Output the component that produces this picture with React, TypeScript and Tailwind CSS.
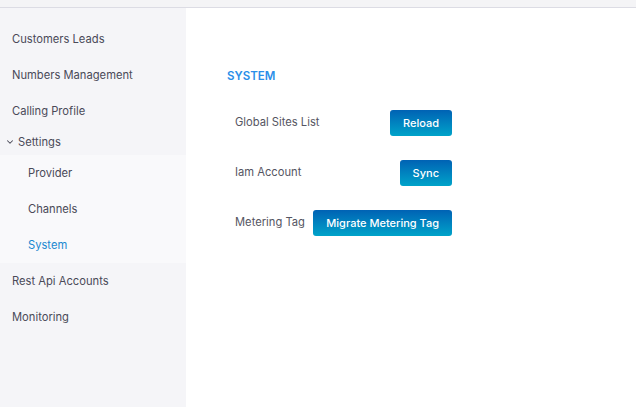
import { ChevronDown } from "lucide-react"

const topItems = ["Customers Leads", "Numbers Management", "Calling Profile"]
const subItems = ["Provider", "Channels", "System"]
const bottomItems = ["Rest Api Accounts", "Monitoring"]

function ActionButton({ label }: { label: string }) {
  return (
    <button className="h-[26px] px-[13px] shrink-0 whitespace-nowrap rounded-[3px] bg-gradient-to-b from-[#0062b4] to-[#00a3c9] text-white text-[11px] font-medium">
      {label}
    </button>
  )
}

export default function App() {
  const rows = [
    { label: "Global Sites List", action: "Reload" },
    { label: "Iam Account", action: "Sync" },
    { label: "Metering Tag", action: "Migrate Metering Tag" },
  ]

  return (
    <div className="h-[407px] flex flex-col bg-white font-['Inter',sans-serif] text-[11.2px] text-[#4a4a58]">
      {/* top strip */}
      <div className="h-[8px] shrink-0 bg-[#f4f4f6] border-b border-[#dcdce4]" />

      <div className="flex flex-1 min-h-0">
        {/* Sidebar */}
        <div className="w-[186px] shrink-0 bg-[#f5f5f8] pt-[13px]">
          {topItems.map((item) => (
            <div key={item} className="h-[36px] flex items-center pl-[12px]">
              {item}
            </div>
          ))}
          <div className="h-[26px] flex items-center pl-[5px] gap-[3px]">
            <ChevronDown size={10} strokeWidth={2.5} />
            <span>Settings</span>
          </div>
          <div className="bg-[#f9f9fb]">
            {subItems.map((item) => (
              <div
                key={item}
                className={`h-[36px] flex items-center pl-[28px] ${
                  item === "System" ? "text-[#1a88d0]" : ""
                }`}
              >
                {item}
              </div>
            ))}
          </div>
          {bottomItems.map((item) => (
            <div key={item} className="h-[36px] flex items-center pl-[12px]">
              {item}
            </div>
          ))}
        </div>

        {/* Main */}
        <div className="flex-1 pl-[41px] pt-[60px]">
          <div className="text-[#2b8ee8] font-semibold text-[11.5px] leading-[16px]">SYSTEM</div>
          <div className="mt-[26px] ml-[8px] w-[217px] flex flex-col gap-[24px]">
            {rows.map((row) => (
              <div key={row.label} className="flex items-start justify-between gap-2">
                <span className="mt-[4px] whitespace-nowrap text-[#555562]">{row.label}</span>
                <ActionButton label={row.action} />
              </div>
            ))}
          </div>
        </div>
      </div>
    </div>
  )
}
